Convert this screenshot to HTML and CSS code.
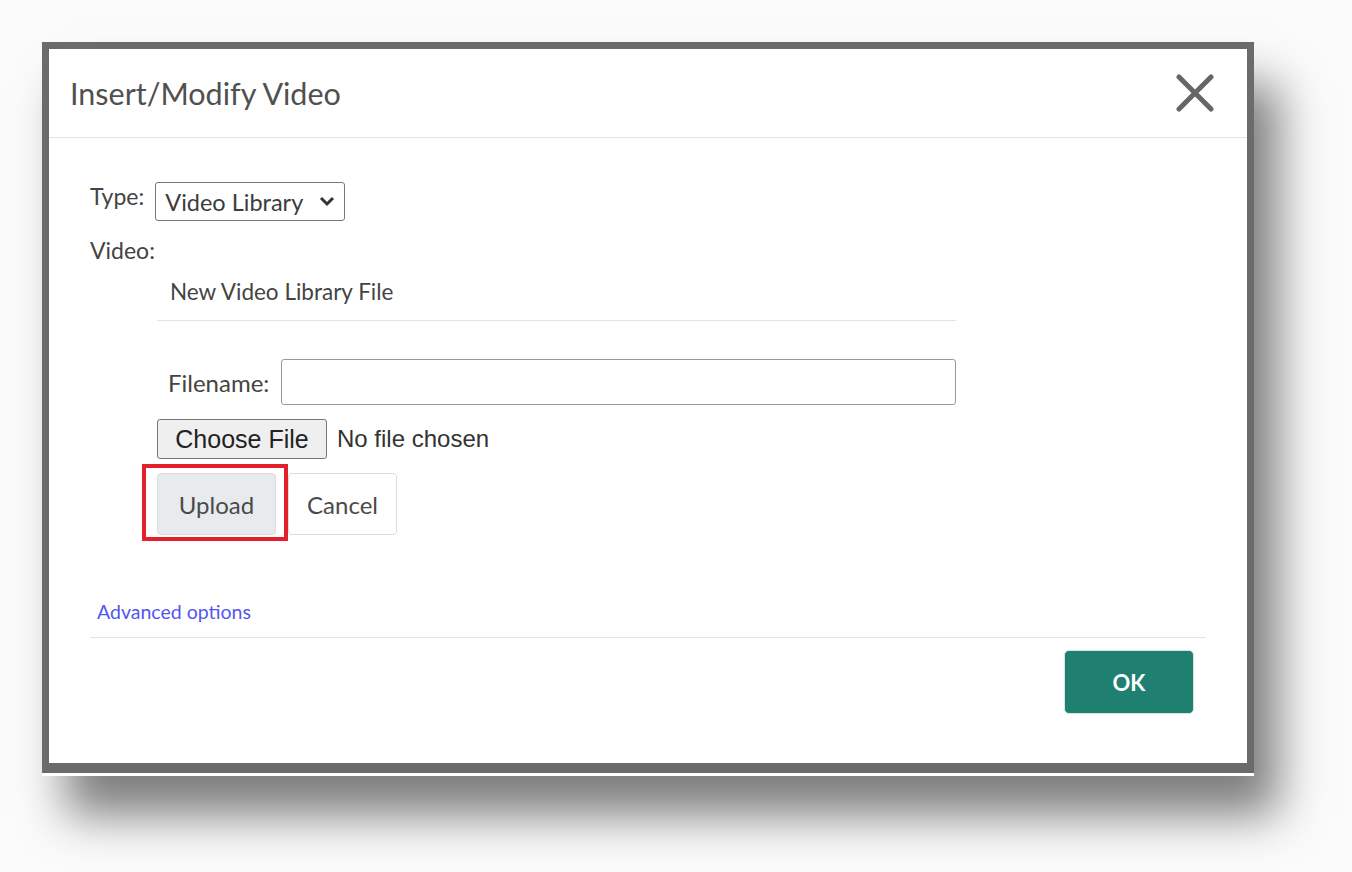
FILE: index.html
```html
<!DOCTYPE html>
<html lang="en">
<head>
    <meta charset="UTF-8">
    <title>Insert/Modify Video</title>
    <link rel="stylesheet" href="styles.css">
</head>
<body>
    <div class="frame">
        <div class="dialog">
            <div class="dialog-head">
                <h1 class="title">Insert/Modify Video</h1>
                <button class="close" type="button">
                    <svg width="38" height="38" viewBox="0 0 38 38">
                        <path d="M3 3 L35 35 M35 3 L3 35" stroke="#666" stroke-width="5" stroke-linecap="round"/>
                    </svg>
                </button>
            </div>

            <div class="dialog-body">
                <div class="type-row">
                    <span class="label">Type:</span>
                    <span class="select">Video Library
                        <svg width="16" height="11" viewBox="0 0 16 11"><path d="M2 2 L8 8 L14 2" stroke="#333" stroke-width="3" fill="none"/></svg>
                    </span>
                </div>
                <div class="label video-label">Video:</div>

                <div class="upload-box">
                    <div class="box-title">New Video Library File</div>
                    <div class="filename-row">
                        <span class="label">Filename:</span>
                        <span class="text-input"></span>
                    </div>
                    <div class="file-row">
                        <span class="file-btn">Choose File</span>
                        <span class="file-none">No file chosen</span>
                    </div>
                    <div class="btn-row">
                        <span class="marked"><span class="btn btn-gray">Upload</span></span>
                        <span class="btn btn-white">Cancel</span>
                    </div>
                </div>

                <a class="advanced" href="#">Advanced options</a>
                <div class="footer">
                    <span class="ok">OK</span>
                </div>
            </div>
        </div>
    </div>
</body>
</html>
```

FILE: styles.css
```css
html{
    height: 100%;
}
body{
    margin: 0;
    min-height: 100%;
    box-sizing: border-box;
    padding: 42px 0 0 42px;
    background: #fbfbfb;
    font-family: Lato, "Open Sans", sans-serif;
    color: #474747;
}

.frame{
    width: 1198px;
    height: 714px;
    padding: 7px 7px 10px 7px;
    background: #6b6b6b;
    box-shadow: 0 3px 0 #fff, 24px 42px 44px rgba(0,0,0,0.5);
}

.dialog{
    height: 100%;
    background: #fff;
    display: flex;
    flex-direction: column;
}

.dialog-head{
    height: 88px;
    border-bottom: 1px solid #e4e4e4;
    display: flex;
    align-items: center;
    justify-content: space-between;
    padding: 0 33px 0 21px;
}
.title{
    margin: 0;
    font-size: 30.5px;
    font-weight: normal;
    color: #505050;
}
.close{
    border: none;
    background: none;
    padding: 0;
    display: flex;
}

.dialog-body{
    flex: 1;
    padding: 44px 41px 0 41px;
    display: flex;
    flex-direction: column;
}

.label{
    font-size: 23px;
    color: #444;
}

.type-row{
    display: flex;
    align-items: flex-start;
    gap: 11px;
}
.select{
    box-sizing: border-box;
    width: 190px;
    height: 39px;
    border: 1px solid #777;
    border-radius: 3px;
    display: flex;
    align-items: center;
    justify-content: space-between;
    padding: 0 9px;
    font-size: 23.5px;
    color: #3c3c3c;
}

.video-label{
    margin-top: 15px;
}

.upload-box{
    margin-left: 67px;
    width: 799px;
}
.box-title{
    padding: 14px 0 15px 13px;
    font-size: 22.5px;
    color: #444;
    border-bottom: 1px solid #e4e4e4;
}

.filename-row{
    display: flex;
    align-items: center;
    gap: 12px;
    margin-top: 38px;
    padding-left: 11px;
}
.filename-row .label{
    font-size: 24px;
}
.text-input{
    flex: 1;
    height: 44px;
    border: 1px solid #999;
    border-radius: 3px;
}

.file-row{
    display: flex;
    align-items: center;
    gap: 10px;
    margin-top: 14px;
    font-family: "Liberation Sans", Arial, sans-serif;
    font-size: 24px;
}
.file-btn{
    width: 168px;
    height: 38px;
    border: 1px solid #767676;
    border-radius: 3px;
    background: #efefef;
    color: #222;
    display: flex;
    align-items: center;
    justify-content: center;
    font-size: 25px;
}
.file-none{
    color: #333;
}

.btn-row{
    display: flex;
    margin-top: 14px;
}
.btn{
    height: 60px;
    border: 1px solid #dcdcdc;
    border-radius: 4px;
    display: flex;
    align-items: center;
    justify-content: center;
    font-size: 24px;
    color: #4a4a4a;
}
.btn-gray{
    width: 117px;
    background: #e8ebee;
}
.btn-white{
    width: 107px;
    background: #fff;
}
.marked{
    position: relative;
    margin-right: 12px;
}
.marked::after{
    content: "";
    position: absolute;
    top: -9px;
    left: -15px;
    right: -12px;
    bottom: -6px;
    border: 4px solid #e3202c;
}

.advanced{
    margin-top: 65px;
    margin-left: 7px;
    font-size: 19.5px;
    color: #5157ef;
    text-decoration: none;
}

.footer{
    margin-top: 14px;
    border-top: 1px solid #e4e4e4;
    padding-top: 12px;
    display: flex;
    justify-content: flex-end;
    padding-right: 12px;
}
.ok{
    width: 128px;
    height: 62px;
    border: 1px solid #d7e7e4;
    border-radius: 5px;
    background: #1f8071;
    color: #fff;
    font-weight: bold;
    font-size: 22px;
    display: flex;
    align-items: center;
    justify-content: center;
}
```
